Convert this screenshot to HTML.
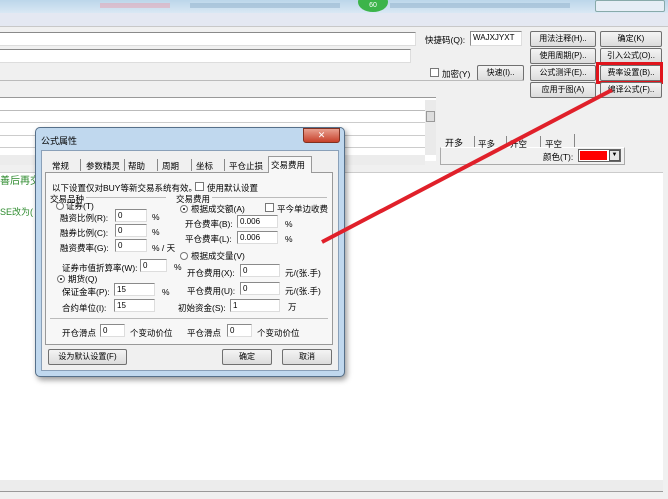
<!DOCTYPE html>
<html><head><meta charset="utf-8"><style>
*{margin:0;padding:0;box-sizing:border-box}
body{width:668px;height:499px;overflow:hidden;background:#f0f0f0;position:relative;font-family:"Liberation Sans","Noto Sans CJK SC",sans-serif;font-size:9px;color:#000}
.a{position:absolute;white-space:nowrap}
.in{position:absolute;background:#fff;border:1px solid #8a8a8a;border-right-color:#ddd;border-bottom-color:#ddd;font-size:8px;padding-left:2px;line-height:11px}
.btn{position:absolute;background:linear-gradient(#f4f4f4,#dcdcdc);border:1px solid #707070;border-radius:2px;text-align:center;font-size:8px;line-height:14px}
.t{position:absolute;font-size:8.5px;white-space:nowrap}
.cb{position:absolute;width:9px;height:9px;border:1px solid #777;background:#fff}
.rd{position:absolute;width:8px;height:8px;border:1px solid #777;border-radius:50%;background:#fff}
.rd.on::after{content:"";position:absolute;left:2px;top:2px;width:2px;height:2px;background:#000;border-radius:50%}
</style></head><body>
<div class="a" style="left:0;top:0;width:668px;height:13px;background:linear-gradient(#bcd6ea,#d9e8f4)"></div>
<div class="a" style="left:100px;top:3px;width:70px;height:5px;background:#e8a0b0;opacity:.5"></div>
<div class="a" style="left:190px;top:3px;width:150px;height:5px;background:#9ab8d0;opacity:.6"></div>
<div class="a" style="left:390px;top:3px;width:180px;height:5px;background:#9ab8d0;opacity:.6"></div>
<div class="a" style="left:358px;top:-8px;width:30px;height:20px;border-radius:50%;background:#3cb44a;color:#fff;font-size:7px;text-align:center;line-height:28px">60</div>
<div class="a" style="left:595px;top:0;width:70px;height:12px;border:1px solid #8aa;border-radius:2px;background:#e6eef6"></div>
<div class="a" style="left:0;top:13px;width:668px;height:14px;background:#e4e8f2;border-bottom:1px solid #c8c8c8"></div>
<div class="in" style="left:-2px;top:32px;width:418px;height:14px"></div>
<div class="t" style="left:425px;top:34px">快捷码(Q):</div>
<div class="in" style="left:470px;top:31px;width:52px;height:15px">WAJXJYXT</div>
<div class="in" style="left:-2px;top:49px;width:413px;height:14px"></div>
<div class="cb" style="left:430px;top:68px"></div><div class="t" style="left:442px;top:68px">加密(Y)</div>
<div class="btn" style="left:477px;top:65px;width:47px;height:16px">快速(I)..</div>
<div class="a" style="left:0;top:80px;width:524px;height:1px;background:#bbb"></div>
<div class="btn" style="left:530px;top:31px;width:66px;height:16px">用法注释(H)..</div>
<div class="btn" style="left:600px;top:31px;width:62px;height:16px">确定(K)</div>
<div class="btn" style="left:530px;top:48px;width:66px;height:16px">使用周期(P)..</div>
<div class="btn" style="left:600px;top:48px;width:62px;height:16px">引入公式(O)..</div>
<div class="btn" style="left:530px;top:65px;width:66px;height:16px">公式测评(E)..</div>
<div class="btn" style="left:600px;top:65px;width:62px;height:16px">费率设置(B)..</div>
<div class="a" style="left:596px;top:62px;width:67px;height:22px;border:3px solid #e0141c"></div>
<div class="btn" style="left:530px;top:82px;width:66px;height:16px">应用于图(A)</div>
<div class="btn" style="left:600px;top:82px;width:62px;height:16px">编译公式(F)..</div>
<div class="a" style="left:0;top:97px;width:436px;height:64px;background:#fff;border-top:1px solid #999"></div>
<div class="a" style="left:0;top:110px;width:425px;height:1px;background:#bbb"></div>
<div class="a" style="left:0;top:122px;width:425px;height:1px;background:#ccc"></div>
<div class="a" style="left:0;top:135px;width:425px;height:1px;background:#ccc"></div>
<div class="a" style="left:0;top:147px;width:425px;height:1px;background:#ccc"></div>
<div class="a" style="left:0;top:155px;width:425px;height:10px;background:#ececec"></div>
<div class="a" style="left:425px;top:100px;width:11px;height:55px;background:#eaeaea"></div>
<div class="a" style="left:426px;top:111px;width:9px;height:11px;background:#ddd;border:1px solid #999"></div>
<div class="a" style="left:440px;top:147px;width:185px;height:18px;border:1px solid #aaa;border-top-color:#fff"></div>
<div class="t" style="left:445px;top:136px;font-size:9px">开多</div>
<div class="a" style="left:440px;top:134px;width:135px;height:13px;border-right:1px solid #888"></div>
<div class="t" style="left:478px;top:138px">平多</div><div class="a" style="left:474px;top:136px;width:1px;height:11px;background:#888"></div>
<div class="t" style="left:510px;top:138px">开空</div><div class="a" style="left:506px;top:136px;width:1px;height:11px;background:#888"></div>
<div class="t" style="left:545px;top:138px">平空</div><div class="a" style="left:540px;top:136px;width:1px;height:11px;background:#888"></div>
<div class="t" style="left:543px;top:151px">颜色(T):</div>
<div class="a" style="left:578px;top:149px;width:43px;height:13px;border:1px solid #666;background:#fff"></div>
<div class="a" style="left:580px;top:151px;width:27px;height:9px;background:#f00"></div>
<div class="a" style="left:609px;top:150px;width:11px;height:11px;background:#e8e8e8;border:1px solid #555;font-size:6px;text-align:center;line-height:9px">▼</div>
<div class="a" style="left:0;top:172px;width:663px;height:308px;background:#fff;border-top:1px solid #ccc"></div>
<div class="t" style="left:0;top:172px;color:#2e8b2e;font-size:10px">善后再交</div>
<div class="t" style="left:0;top:205px;color:#2e8b2e;font-size:9px">SE改为(</div>
<div class="a" style="left:0;top:480px;width:663px;height:12px;background:#ececec;border-bottom:1px solid #999"></div>
<div class="a" style="left:35px;top:127px;width:310px;height:250px;background:#c0d8ee;border:1px solid #56708a;border-radius:5px;box-shadow:2px 3px 6px rgba(0,0,0,.4)"></div>
<div class="t" style="left:41px;top:134px;font-size:9px">公式属性</div>
<div class="a" style="left:303px;top:128px;width:37px;height:15px;background:linear-gradient(#e8a090,#c7402a);border:1px solid #803020;border-radius:0 0 3px 3px;color:#fff;font-size:9px;text-align:center;line-height:13px">✕</div>
<div class="a" style="left:41px;top:150px;width:298px;height:221px;background:#f0f0f0;border:1px solid #8aa0b8"></div>
<div class="a" style="left:45px;top:172px;width:288px;height:173px;border:1px solid #999;background:#f7f7f7"></div>
<div class="t" style="left:52px;top:160px">常规</div>
<div class="t" style="left:86px;top:160px">参数精灵</div>
<div class="t" style="left:128px;top:160px">帮助</div>
<div class="t" style="left:162px;top:160px">周期</div>
<div class="t" style="left:196px;top:160px">坐标</div>
<div class="t" style="left:229px;top:160px">平仓止损</div>
<div class="a" style="left:80px;top:159px;width:1px;height:12px;background:#888"></div>
<div class="a" style="left:124px;top:159px;width:1px;height:12px;background:#888"></div>
<div class="a" style="left:157px;top:159px;width:1px;height:12px;background:#888"></div>
<div class="a" style="left:191px;top:159px;width:1px;height:12px;background:#888"></div>
<div class="a" style="left:224px;top:159px;width:1px;height:12px;background:#888"></div>
<div class="a" style="left:268px;top:156px;width:44px;height:17px;border:1px solid #999;border-bottom:none;background:#f7f7f7"></div>
<div class="t" style="left:271px;top:159px">交易费用</div>
<div class="t" style="left:52px;top:182px">以下设置仅对BUY等新交易系统有效。</div>
<div class="cb" style="left:195px;top:182px"></div><div class="t" style="left:207px;top:182px">使用默认设置</div>
<div class="t" style="left:50px;top:193px">交易品种</div>
<div class="a" style="left:86px;top:197px;width:80px;height:1px;background:#bbb"></div>
<div class="t" style="left:176px;top:193px">交易费用</div>
<div class="a" style="left:212px;top:197px;width:115px;height:1px;background:#bbb"></div>
<div class="rd" style="left:56px;top:202px"></div><div class="t" style="left:66px;top:200px">证券(T)</div>
<div class="t" style="left:60px;top:212px">融资比例(R):</div><div class="in" style="left:115px;top:209px;width:32px;height:13px">0</div><div class="t" style="left:152px;top:212px">%</div>
<div class="t" style="left:60px;top:227px">融券比例(C):</div><div class="in" style="left:115px;top:224px;width:32px;height:13px">0</div><div class="t" style="left:152px;top:227px">%</div>
<div class="t" style="left:60px;top:242px">融资费率(G):</div><div class="in" style="left:115px;top:239px;width:32px;height:13px">0</div><div class="t" style="left:152px;top:242px">% / 天</div>
<div class="rd on" style="left:180px;top:205px"></div><div class="t" style="left:191px;top:203px">根据成交额(A)</div>
<div class="cb" style="left:265px;top:203px"></div><div class="t" style="left:277px;top:203px">平今单边收费</div>
<div class="t" style="left:185px;top:218px">开仓费率(B):</div><div class="in" style="left:237px;top:215px;width:41px;height:13px">0.006</div><div class="t" style="left:285px;top:219px">%</div>
<div class="t" style="left:185px;top:233px">平仓费率(L):</div><div class="in" style="left:237px;top:231px;width:41px;height:13px">0.006</div><div class="t" style="left:285px;top:234px">%</div>
<div class="rd" style="left:180px;top:252px"></div><div class="t" style="left:191px;top:250px">根据成交量(V)</div>
<div class="t" style="left:62px;top:262px">证券市值折算率(W):</div><div class="in" style="left:140px;top:259px;width:27px;height:13px">0</div><div class="t" style="left:174px;top:262px">%</div>
<div class="t" style="left:187px;top:267px">开仓费用(X):</div><div class="in" style="left:240px;top:264px;width:40px;height:13px">0</div><div class="t" style="left:285px;top:267px">元/(张.手)</div>
<div class="rd on" style="left:57px;top:275px"></div><div class="t" style="left:68px;top:273px">期货(Q)</div>
<div class="t" style="left:62px;top:286px">保证金率(P):</div><div class="in" style="left:114px;top:283px;width:41px;height:13px">15</div><div class="t" style="left:162px;top:287px">%</div>
<div class="t" style="left:187px;top:285px">平仓费用(U):</div><div class="in" style="left:240px;top:282px;width:40px;height:13px">0</div><div class="t" style="left:285px;top:285px">元/(张.手)</div>
<div class="t" style="left:62px;top:302px">合约单位(I):</div><div class="in" style="left:114px;top:299px;width:41px;height:13px">15</div>
<div class="t" style="left:178px;top:302px">初始资金(S):</div><div class="in" style="left:230px;top:299px;width:50px;height:13px">1</div><div class="t" style="left:288px;top:301px">万</div>
<div class="a" style="left:50px;top:318px;width:278px;height:1px;background:#bbb"></div>
<div class="t" style="left:62px;top:327px">开仓滑点</div><div class="in" style="left:100px;top:324px;width:25px;height:13px">0</div><div class="t" style="left:130px;top:327px">个变动价位</div>
<div class="t" style="left:187px;top:327px">平仓滑点</div><div class="in" style="left:227px;top:324px;width:25px;height:13px">0</div><div class="t" style="left:257px;top:327px">个变动价位</div>
<div class="btn" style="left:48px;top:349px;width:79px;height:16px">设为默认设置(F)</div>
<div class="btn" style="left:222px;top:349px;width:50px;height:16px">确定</div>
<div class="btn" style="left:282px;top:349px;width:50px;height:16px">取消</div>
<svg class="a" style="left:0;top:0" width="668" height="499"><line x1="612" y1="90" x2="322" y2="242" stroke="#e0202a" stroke-width="4"/></svg>
</body></html>
